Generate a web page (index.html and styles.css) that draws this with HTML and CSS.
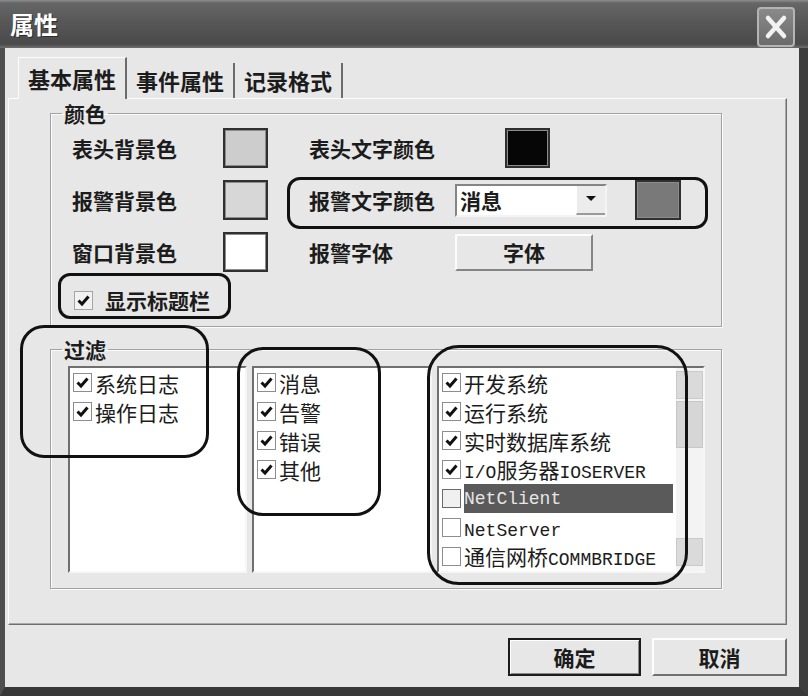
FILE: index.html
```html
<!DOCTYPE html>
<html lang="zh-CN">

<head>
    <meta charset="UTF-8">
    <title>属性</title>
    <link rel="stylesheet" href="styles.css">
</head>

<body>
    <div class="window">
        <div class="titlebar">
            <span class="title">属性</span>
            <span class="close">
                <svg width="30" height="32" viewBox="0 0 30 32">
                    <path d="M7 7 L23 25 M23 7 L7 25" stroke="#f2f2f2" stroke-width="4.5" stroke-linecap="round" fill="none" />
                </svg>
            </span>
        </div>

        <div class="client">
            <div class="tabs">
                <div class="tab active">基本属性</div>
                <div class="tab">事件属性</div>
                <div class="tab">记录格式</div>
            </div>

            <div class="panel">
                <fieldset class="group">
                    <legend>颜色</legend>
                    <div class="color-grid">
                        <span class="label">表头背景色</span>
                        <span class="swatch sw-header"></span>
                        <span class="label">表头文字颜色</span>
                        <span class="swatch sw-black"></span>
                        <span></span>

                        <span class="label">报警背景色</span>
                        <span class="swatch sw-alarm"></span>
                        <span class="label">报警文字颜色</span>
                        <span class="select">
                            <span class="select-text">消息</span>
                            <span class="select-btn">
                                <svg width="10" height="6" viewBox="0 0 10 6"><polygon points="0,0 10,0 5,5" fill="#111" /></svg>
                            </span>
                        </span>
                        <span class="swatch sw-gray"></span>

                        <span class="label">窗口背景色</span>
                        <span class="swatch sw-white"></span>
                        <span class="label">报警字体</span>
                        <span class="font-btn">字体</span>
                        <span></span>

                        <label class="show-title">
                            <span class="cb cb-flat">
                                <svg width="15" height="15" viewBox="0 0 15 15"><path d="M2.5 7.5 L6 11 L12.5 3.5" stroke="#111" stroke-width="3" fill="none" /></svg>
                            </span>
                            <span class="label">显示标题栏</span>
                        </label>
                    </div>
                </fieldset>

                <fieldset class="group filter">
                    <legend>过滤</legend>
                    <div class="lists">
                        <div class="list list-source">
                            <div class="item"><span class="cb"><svg width="15" height="15" viewBox="0 0 15 15"><path d="M2.5 7.5 L6 11 L12.5 3.5" stroke="#111" stroke-width="3" fill="none" /></svg></span><span class="text">系统日志</span></div>
                            <div class="item"><span class="cb"><svg width="15" height="15" viewBox="0 0 15 15"><path d="M2.5 7.5 L6 11 L12.5 3.5" stroke="#111" stroke-width="3" fill="none" /></svg></span><span class="text">操作日志</span></div>
                        </div>

                        <div class="list list-level">
                            <div class="item"><span class="cb"><svg width="15" height="15" viewBox="0 0 15 15"><path d="M2.5 7.5 L6 11 L12.5 3.5" stroke="#111" stroke-width="3" fill="none" /></svg></span><span class="text">消息</span></div>
                            <div class="item"><span class="cb"><svg width="15" height="15" viewBox="0 0 15 15"><path d="M2.5 7.5 L6 11 L12.5 3.5" stroke="#111" stroke-width="3" fill="none" /></svg></span><span class="text">告警</span></div>
                            <div class="item"><span class="cb"><svg width="15" height="15" viewBox="0 0 15 15"><path d="M2.5 7.5 L6 11 L12.5 3.5" stroke="#111" stroke-width="3" fill="none" /></svg></span><span class="text">错误</span></div>
                            <div class="item"><span class="cb"><svg width="15" height="15" viewBox="0 0 15 15"><path d="M2.5 7.5 L6 11 L12.5 3.5" stroke="#111" stroke-width="3" fill="none" /></svg></span><span class="text">其他</span></div>
                        </div>

                        <div class="list list-module">
                            <div class="items">
                                <div class="item"><span class="cb"><svg width="15" height="15" viewBox="0 0 15 15"><path d="M2.5 7.5 L6 11 L12.5 3.5" stroke="#111" stroke-width="3" fill="none" /></svg></span><span class="text">开发系统</span></div>
                                <div class="item"><span class="cb"><svg width="15" height="15" viewBox="0 0 15 15"><path d="M2.5 7.5 L6 11 L12.5 3.5" stroke="#111" stroke-width="3" fill="none" /></svg></span><span class="text">运行系统</span></div>
                                <div class="item"><span class="cb"><svg width="15" height="15" viewBox="0 0 15 15"><path d="M2.5 7.5 L6 11 L12.5 3.5" stroke="#111" stroke-width="3" fill="none" /></svg></span><span class="text">实时数据库系统</span></div>
                                <div class="item"><span class="cb"><svg width="15" height="15" viewBox="0 0 15 15"><path d="M2.5 7.5 L6 11 L12.5 3.5" stroke="#111" stroke-width="3" fill="none" /></svg></span><span class="text"><span class="lat">I/O</span>服务器<span class="lat">IOSERVER</span></span></div>
                                <div class="item sel"><span class="cb"></span><span class="text"><span class="lat">NetClient</span></span></div>
                                <div class="item"><span class="cb"></span><span class="text"><span class="lat">NetServer</span></span></div>
                                <div class="item"><span class="cb"></span><span class="text">通信网桥<span class="lat">COMMBRIDGE</span></span></div>
                            </div>
                            <div class="scroll">
                                <span class="scroll-btn"></span>
                                <span class="scroll-thumb"></span>
                                <span class="scroll-track"></span>
                                <span class="scroll-btn"></span>
                            </div>
                        </div>
                    </div>
                </fieldset>
            </div>

            <div class="actions">
                <span class="btn default">确定</span>
                <span class="btn cancel">取消</span>
            </div>
        </div>

        <!-- hand drawn marks over the screenshot -->
        <div class="mark mark-alarm"></div>
        <div class="mark mark-title"></div>
        <div class="mark mark-source"></div>
        <div class="mark mark-level"></div>
        <div class="mark mark-module"></div>
    </div>
</body>

</html>
```

FILE: styles.css
```css
body {
    margin: 0;
    padding: 0;
    background-color: #fff;
    font-family: "Noto Sans CJK SC", "Noto Sans", sans-serif;
    color: #1c1c1c;
}

.window {
    position: relative;
    width: 808px;
    height: 696px;
    display: flex;
    flex-direction: column;
    background-color: #e7e7e7;
    overflow: hidden;
}

/* title bar */

.titlebar {
    height: 48px;
    flex: none;
    display: flex;
    align-items: center;
    justify-content: space-between;
    padding: 0 13px 0 10px;
    box-sizing: border-box;
    background: linear-gradient(to bottom, #8e8e8e 0, #666 3px, #575757 45%, #4a4a4a 92%, #6e6e6e 100%);
}

.title {
    color: #fff;
    font-size: 24px;
    font-weight: 700;
    line-height: 1;
    text-shadow: 1px 1px 0 #2a2a2a;
}

.close {
    align-self: flex-start;
    margin-top: 7px;
    width: 38px;
    height: 40px;
    box-sizing: border-box;
    border: 2px solid #b4b4b4;
    border-radius: 4px;
    background: linear-gradient(to bottom, #8a8a8a, #6b6b6b);
    display: flex;
    align-items: center;
    justify-content: center;
}

/* client area */

.client {
    flex: 1;
    display: flex;
    flex-direction: column;
    border-left: 5px solid #4f4f4f;
    border-right: 9px solid #3d3d3d;
    border-bottom: 9px solid #383838;
    padding: 10px 12px 0 3px;
}

.tabs {
    display: flex;
    align-items: flex-end;
    height: 40px;
    margin-left: 10px;
}

.tab {
    height: 35px;
    padding: 0 9px;
    font-size: 22px;
    line-height: 35px;
    font-weight: 700;
    border-right: 2px solid #6c6c6c;
}

.tab.active {
    position: relative;
    z-index: 1;
    height: 41px;
    line-height: 40px;
    margin-bottom: -1px;
    border-top: 1px solid #fcfcfc;
    border-left: 1px solid #fcfcfc;
    background-color: #e7e7e7;
}

.panel {
    height: 527px;
    box-sizing: border-box;
    border: 1px solid;
    border-color: #fcfcfc #6e6e6e #6e6e6e #fcfcfc;
    box-shadow: inset -1px -1px 0 #a8a8a8;
    padding: 3px 0 0 41px;
}

.group {
    width: 672px;
    min-width: 0;
    box-sizing: border-box;
    margin: 0;
    padding: 0;
    border: 1px solid #a2a2a2;
    box-shadow: 1px 1px 0 #fbfbfb, inset 1px 1px 0 #fbfbfb;
}

.group legend {
    margin-left: 11px;
    padding: 0 2px;
    font-size: 21px;
    line-height: 22px;
    font-weight: 700;
}

.filter {
    margin-top: 11px;
}

/* colours */

.color-grid {
    display: grid;
    grid-template-columns: 151px 86px 146px 180px 46px;
    grid-template-rows: 40px 40px 40px auto;
    row-gap: 12px;
    align-items: center;
    padding: 4px 0 14px 21px;
}

.label {
    font-size: 21px;
    line-height: 24px;
    font-weight: 700;
    white-space: nowrap;
}

.swatch {
    width: 45px;
    height: 40px;
    box-sizing: border-box;
    border: 2px solid #303030;
    box-shadow: inset 0 0 0 1px #8c8c8c;
}

.sw-header {
    background-color: #cdcdcd;
}

.sw-alarm {
    background-color: #d7d7d7;
}

.sw-white {
    background-color: #fff;
}

.sw-black {
    margin-left: 50px;
    background-color: #060606;
}

.sw-gray {
    width: 46px;
    background-color: #797979;
}

.select {
    width: 152px;
    height: 33px;
    box-sizing: border-box;
    display: flex;
    align-items: stretch;
    background-color: #fff;
    border: 2px solid;
    border-color: #858585 #f4f4f4 #f4f4f4 #858585;
}

.select-text {
    flex: 1;
    padding-left: 3px;
    font-size: 21px;
    line-height: 29px;
    font-weight: 700;
}

.select-btn {
    width: 28px;
    display: flex;
    align-items: center;
    justify-content: center;
    background-color: #ececec;
    border-left: 1px solid #fff;
    border-bottom: 2px solid #9a9a9a;
}

.font-btn {
    width: 138px;
    height: 37px;
    box-sizing: border-box;
    text-align: center;
    font-size: 21px;
    line-height: 33px;
    font-weight: 700;
    border: 2px solid;
    border-color: #fcfcfc #858585 #858585 #fcfcfc;
}

.show-title {
    grid-column: 1 / -1;
    display: flex;
    align-items: center;
    margin-top: 4px;
    padding-left: 2px;
}

.show-title .label {
    margin-left: 12px;
}

/* check boxes */

.cb {
    flex: none;
    width: 19px;
    height: 19px;
    box-sizing: border-box;
    border: 1px solid #8d8d8d;
    background-color: #fff;
    display: flex;
    align-items: center;
    justify-content: center;
}

.cb-flat {
    background-color: #f2f2f2;
    border-color: #a5a5a5;
}

/* filter lists */

.lists {
    display: flex;
    gap: 5px;
    padding: 6px 16px 15px 17px;
}

.list {
    height: 207px;
    box-sizing: border-box;
    background-color: #fff;
    border: 2px solid;
    border-color: #6f6f6f #f6f6f6 #f6f6f6 #6f6f6f;
}

.list-source {
    width: 179px;
}

.list-level {
    width: 180px;
}

.list-module {
    width: 268px;
    display: flex;
}

.items {
    flex: 1;
}

.item {
    display: flex;
    align-items: center;
    gap: 3px;
    height: 29px;
    padding: 0 3px;
    font-size: 21px;
    line-height: 24px;
    white-space: nowrap;
}

.item .text {
    line-height: 24px;
}

.lat {
    font-family: "Liberation Mono", monospace;
    font-size: 18px;
    line-height: 1;
}

.item.sel .text {
    flex: 1;
    align-self: stretch;
    display: flex;
    align-items: center;
    background-color: #5a5a5a;
    color: #e6e6e6;
}

.item.sel .cb {
    border-color: #6a6a6a;
    background-color: #f0f0f0;
}

.scroll {
    width: 27px;
    display: flex;
    flex-direction: column;
    gap: 2px;
    padding: 3px 0 5px;
    background-color: #f3f3f3;
}

.scroll-btn {
    height: 26px;
    background-color: #dadada;
    border: 1px solid #cacaca;
}

.scroll-thumb {
    height: 45px;
    background-color: #d6d6d6;
    border: 1px solid #c6c6c6;
}

.scroll-track {
    flex: 1;
}

/* dialog buttons */

.actions {
    display: flex;
    justify-content: flex-end;
    gap: 11px;
    margin-top: 13px;
}

.btn {
    height: 38px;
    box-sizing: border-box;
    text-align: center;
    font-size: 21px;
    line-height: 34px;
    font-weight: 700;
    border: 2px solid;
    border-color: #fcfcfc #6f6f6f #6f6f6f #fcfcfc;
}

.btn.default {
    width: 133px;
    border-color: #1c1c1c;
    box-shadow: inset 1px 1px 0 #fff, inset -1px -1px 0 #8a8a8a;
}

.btn.cancel {
    width: 135px;
}

/* marker rings */

.mark {
    position: absolute;
    box-sizing: border-box;
    border: 3px solid #111;
    pointer-events: none;
}

.mark-alarm {
    left: 287px;
    top: 177px;
    width: 421px;
    height: 52px;
    border-radius: 13px;
}

.mark-title {
    left: 58px;
    top: 273px;
    width: 173px;
    height: 46px;
    border-radius: 12px;
}

.mark-source {
    left: 20px;
    top: 325px;
    width: 189px;
    height: 133px;
    border-radius: 24px;
}

.mark-level {
    left: 237px;
    top: 347px;
    width: 144px;
    height: 169px;
    border-radius: 26px;
}

.mark-module {
    left: 427px;
    top: 345px;
    width: 261px;
    height: 240px;
    border-radius: 32px;
}
```
